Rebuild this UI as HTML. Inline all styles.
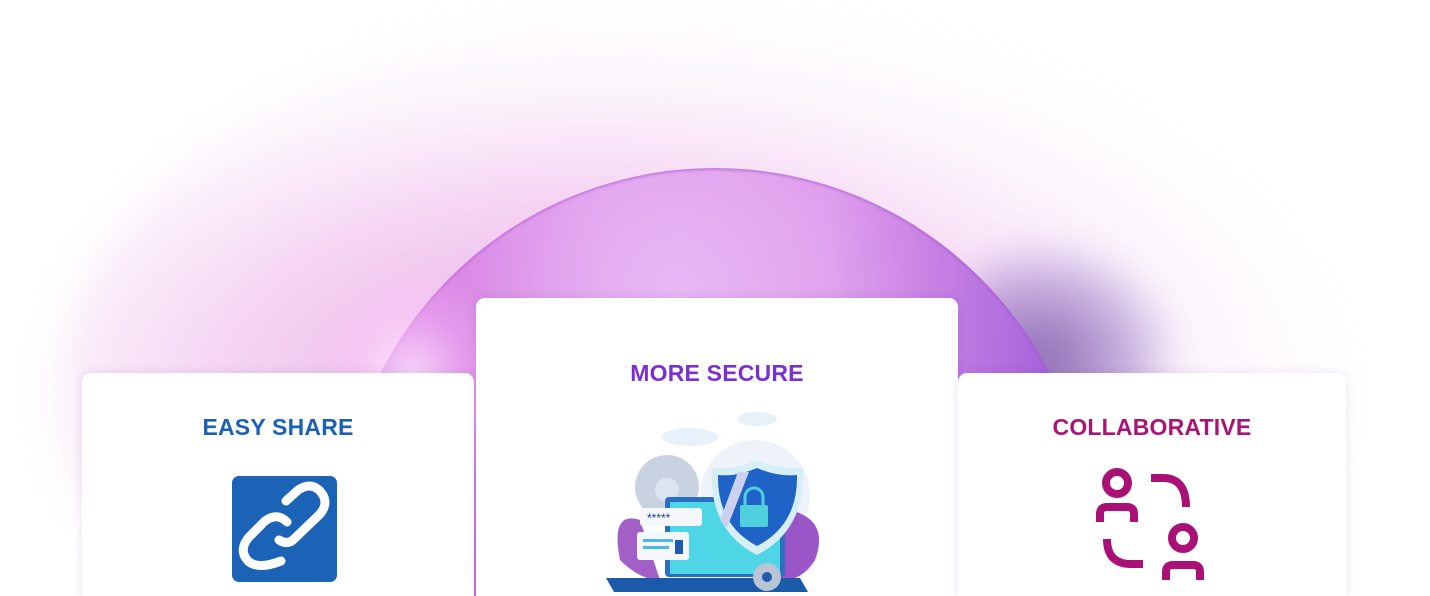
<!DOCTYPE html>
<html><head><meta charset="utf-8"><style>
html,body{margin:0;padding:0;width:1430px;height:596px;overflow:hidden;background:#fff;font-family:"Liberation Sans",sans-serif;position:relative}
.bg{position:absolute;left:0;top:0;width:1430px;height:596px;overflow:hidden}
.haze{position:absolute;left:60px;top:10px;width:1280px;height:760px;border-radius:50%;
background:radial-gradient(ellipse at 42% 50%,rgba(215,100,210,.55) 0%,rgba(230,150,225,.42) 35%,rgba(240,200,240,.2) 55%,rgba(255,255,255,0) 72%);filter:blur(20px)}
.dark{position:absolute;left:950px;top:240px;width:230px;height:200px;border-radius:50%;
background:radial-gradient(ellipse at 40% 60%,rgba(80,40,140,.65),rgba(110,70,180,.3) 50%,rgba(255,255,255,0) 72%);filter:blur(18px)}
.sphere{position:absolute;left:340px;top:168px;width:750px;height:750px;border-radius:50%;
background:radial-gradient(circle at 45% 16%,#e8b8f4 0%,#e2a6ef 18%,#d98ce9 34%,#c476e4 50%,#9c5cda 66%,#7444c6 82%);
box-shadow:inset 0 2px 2px rgba(170,90,210,.55)}
.shadeL{position:absolute;left:340px;top:168px;width:750px;height:750px;border-radius:50%;
background:linear-gradient(90deg,rgba(200,60,200,.25),rgba(0,0,0,0) 35%,rgba(0,0,0,0) 65%,rgba(80,50,190,.3))}
.sphere2{position:absolute;left:320px;top:230px;width:200px;height:260px;border-radius:50%;
background:radial-gradient(ellipse at 45% 60%,rgba(255,235,255,.9),rgba(255,200,250,.35) 35%,rgba(255,255,255,0) 60%);filter:blur(6px)}
.card{position:absolute;background:#fff;border-radius:9px;box-shadow:0 0 10px rgba(80,40,120,.12)}
.t{position:absolute;width:100%;text-align:center;font-weight:bold;font-size:23px;letter-spacing:.2px}
</style></head><body>
<div class="bg">
<div class="haze"></div>
<div class="dark"></div>
<div class="sphere"></div>
<div class="shadeL"></div>
<div class="sphere2"></div>
<div class="card" style="left:82px;top:373px;width:392px;height:232px">
<div class="t" style="top:41px;color:#1a62b5">EASY SHARE</div>
<svg style="position:absolute;left:150px;top:103px" width="106" height="106" viewBox="232 476 106 106">
<rect x="232" y="476" width="105" height="106" rx="7" fill="#1b63b6"/>
<path d="M286,501 L297,491 Q310,481 320,491 Q330,502 320,514 L293,540 Q287,545 279,540" fill="none" stroke="#fff" stroke-width="9" stroke-linecap="round"/>
<path d="M287,522 Q277,512 265,521 L249,537 Q238,550 248,561 Q258,570 281,561" fill="none" stroke="#fff" stroke-width="9" stroke-linecap="round"/>
</svg>
</div>
<div class="card" style="left:476px;top:298px;width:482px;height:307px">
<div class="t" style="top:62px;color:#7b2fd0">MORE SECURE</div>
<svg style="position:absolute;left:114px;top:102px" width="250" height="196" viewBox="590 400 250 196">
<ellipse cx="690" cy="437" rx="28" ry="9" fill="#e8f0fa"/><ellipse cx="757" cy="419" rx="20" ry="7" fill="#e8f0fa"/>
<circle cx="755" cy="495" r="55" fill="#eef3fb"/>
<circle cx="667" cy="487" r="32" fill="#c8d2e0"/><circle cx="667" cy="490" r="12" fill="#dde4ef"/>
<path d="M640,520 Q610,510 620,560 Q640,580 660,580Z" fill="#a25fc8"/>
<path d="M790,510 Q830,520 815,560 Q800,585 770,580Z" fill="#9a56c6"/>
<rect x="665" y="497" width="120" height="80" rx="4" fill="#2a6fc0"/>
<rect x="670" y="502" width="110" height="72" fill="#4fd6e6"/>
<path d="M606,578 L800,578 L808,592 L614,592Z" fill="#1a5aa8"/>
<rect x="640" y="508" width="62" height="18" rx="3" fill="#f4f8fc"/>
<text x="647" y="522" font-size="12" fill="#1d3f8a" font-family="Liberation Sans">*****</text>
<rect x="637" y="532" width="52" height="28" rx="3" fill="#f4f8fc"/>
<rect x="643" y="539" width="30" height="3" fill="#4ab8e0"/><rect x="643" y="546" width="26" height="3" fill="#4ab8e0"/><rect x="675" y="540" width="8" height="14" fill="#1d5ab0"/>
<path d="M757,460 Q780,470 803,468 Q806,530 757,555 Q708,530 712,468 Q735,470 757,460Z" fill="#d6eef5"/>
<path d="M757,468 Q778,477 797,475 Q798,525 757,546 Q717,525 718,475 Q737,477 757,468Z" fill="#1f63c7"/>
<path d="M738,472 L749,472 L727,528 L720,520Z" fill="#cbd0ef"/>
<rect x="740" y="505" width="28" height="22" rx="2" fill="#4fd0dc"/>
<path d="M745,505 V497 A9,9 0 0 1 763,497 V505" fill="none" stroke="#4fd0dc" stroke-width="3"/>
<circle cx="767" cy="577" r="14" fill="#b9c4d4"/><circle cx="767" cy="577" r="5" fill="#1d5ab0"/>
</svg>
</div>
<div class="card" style="left:958px;top:373px;width:388px;height:232px">
<div class="t" style="top:41px;color:#aa1477">COLLABORATIVE</div>
<svg style="position:absolute;left:122px;top:82px" width="140" height="141" viewBox="1080 455 140 141">
<g fill="none" stroke="#aa1177" stroke-width="8">
<circle cx="1117" cy="483" r="11"/>
<path d="M1100,522 V514 Q1100,507 1107,507 H1127 Q1134,507 1134,514 V522"/>
<path d="M1151,478 H1163 Q1186,478 1186,507"/>
<path d="M1107,539 Q1107,564 1131,564 H1143"/>
<circle cx="1183" cy="538" r="11"/>
<path d="M1166,580 V572 Q1166,565 1173,565 H1193 Q1200,565 1200,572 V580"/>
</g>
</svg>
</div>
</div>
</body></html>
